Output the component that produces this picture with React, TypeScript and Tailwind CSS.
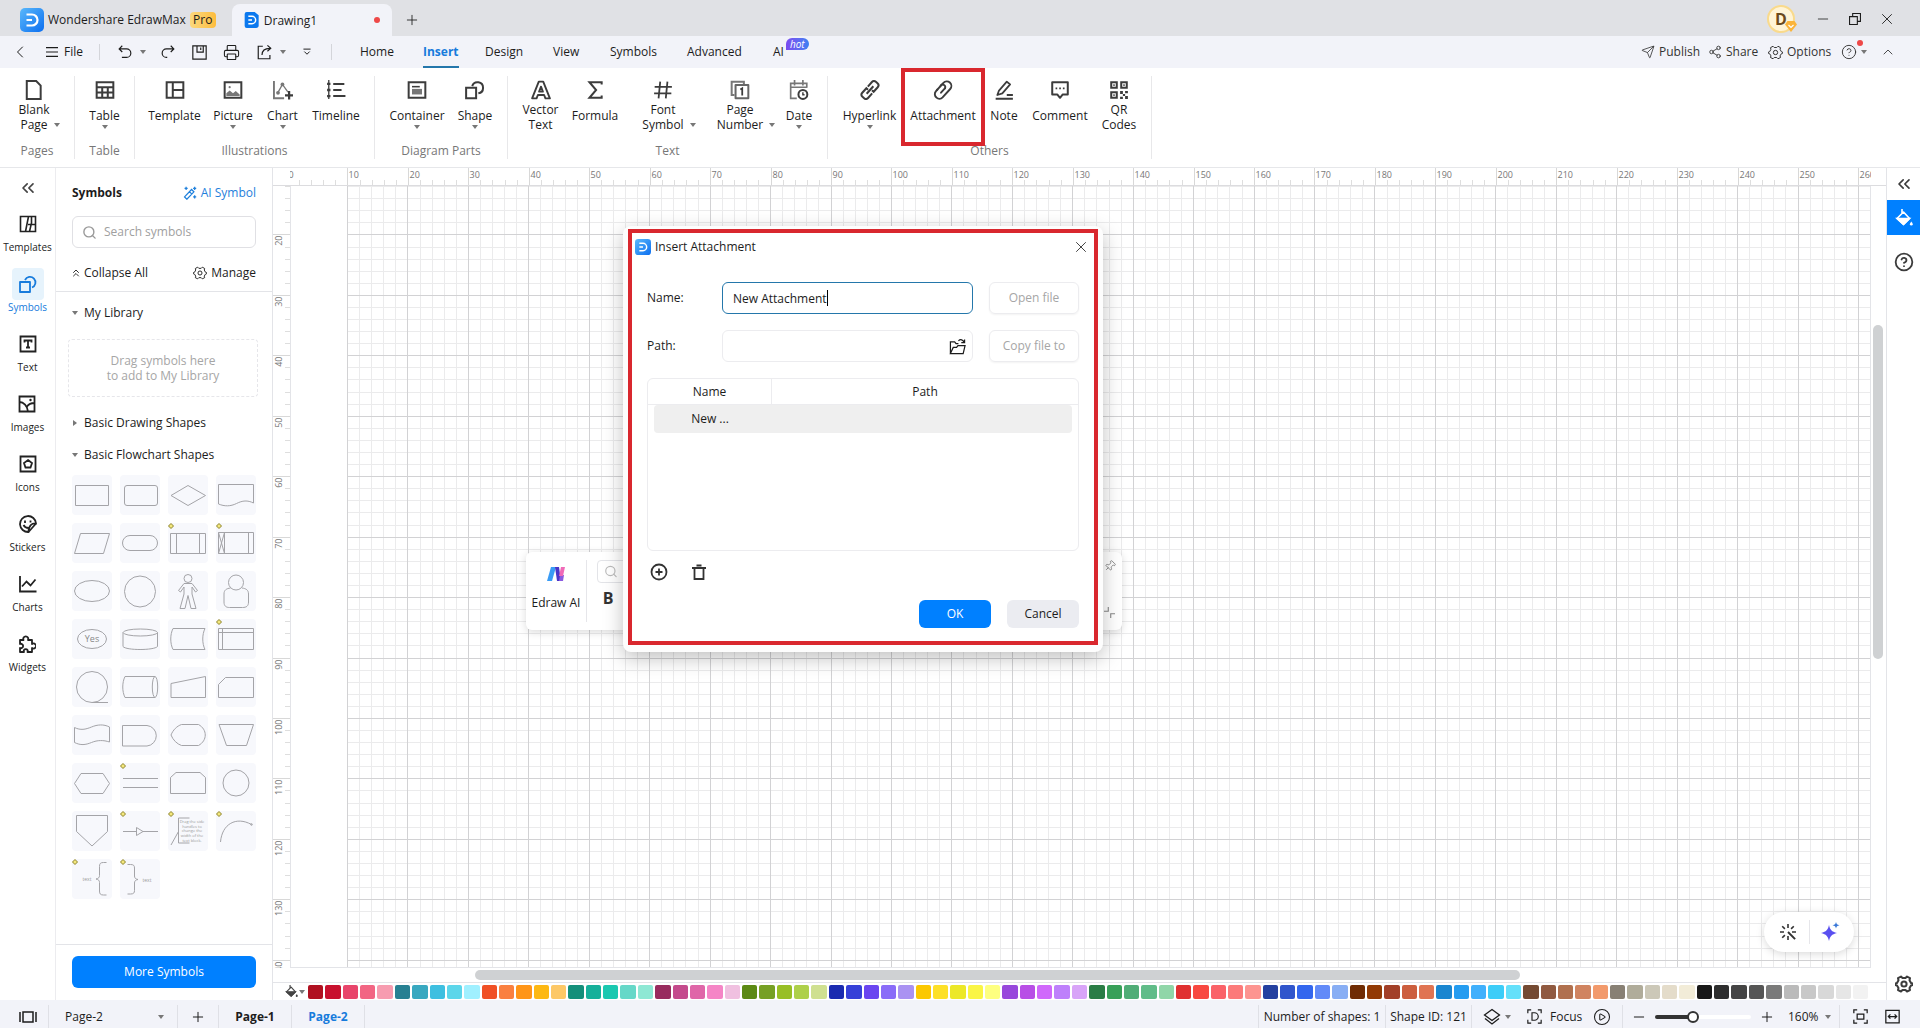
import React from 'react';
import {
  ChevronLeft,
  ChevronUp,
  ChevronsLeft,
  ChevronsUp,
  CirclePlay,
  CircleHelp,
  Minus,
  Pin,
  Plus,
  Printer,
  Search,
  Send,
  Share2,
  X,
} from 'lucide-react';

type IconProps = { children: React.ReactNode; size?: number; stroke?: number; className?: string };

// 18-unit box, line style shared by the ribbon and the side rail
const Icon: React.FC<IconProps> = ({ children, size = 18, stroke = 1.8, className = '' }) => (
  <svg
    width={size}
    height={size}
    viewBox="0 0 18 18"
    fill="none"
    stroke="currentColor"
    strokeWidth={stroke}
    className={`shrink-0 ${className}`}
    aria-hidden="true"
  >
    {children}
  </svg>
);

const Caret: React.FC<{ className?: string }> = ({ className = '' }) => (
  <svg width="6" height="4" viewBox="0 0 6 4" className={`shrink-0 text-[#777] ${className}`} aria-hidden="true">
    <path d="M0 0h6L3 4z" fill="currentColor" />
  </svg>
);

const Logo: React.FC<{ size: number; flat?: boolean }> = ({ size, flat }) => (
  <svg width={size} height={size} viewBox="0 0 24 24" className="shrink-0" aria-hidden="true">
    <defs>
      <linearGradient id="logo" x1="0" y1="0" x2="1" y2="1">
        <stop offset="0" stopColor="#5ab8fb" />
        <stop offset="1" stopColor="#0c6ff0" />
      </linearGradient>
    </defs>
    {flat ? (
      <path d="M4 0h12l6 5v15a4 4 0 0 1-4 4H4a3 3 0 0 1-3-3V3a3 3 0 0 1 3-3z" fill="#0b78ee" />
    ) : (
      <rect width="24" height="24" rx="5" fill="url(#logo)" />
    )}
    <path d="M6.500 6.500H12a5.500 5.500 0 0 1 0 11H6.500M6.500 12H12" fill="none" stroke="#fff" strokeWidth="2.200" />
  </svg>
);

const Gear: React.FC<{ size?: number; stroke?: number }> = ({ size = 16, stroke = 1.2 }) => (
  <Icon size={size} stroke={stroke}>
    <path
      strokeLinejoin="round"
      d="M6 1.500 7.500 3h3L12 1.500l3 1.700-.5 2L16 8l1.500.5v1.500L16 10.500l-1.500 2.500.5 2-3 1.500-1.500-1.500h-3L6 16.500 3 15l.5-2L2 10.500.5 10V8.500L2 8l1.500-2.800-.5-2z"
    />
    <circle cx="9" cy="9" r="2.600" />
  </Icon>
);

const PaintBucket: React.FC<{ size?: number }> = ({ size = 18 }) => (
  <Icon size={size} stroke={1.6}>
    <path d="M7 0v4M2 9.500 8.500 3l6 6.500-6 6z" strokeLinejoin="round" />
    <path d="M2 9.500h12.500l-6 6z" fill="currentColor" />
    <path d="M16.300 12.500c1 1.400 1.400 2 1.400 2.700a1.400 1.400 0 0 1-2.800 0c0-.7.400-1.300 1.400-2.700z" fill="currentColor" stroke="none" />
  </Icon>
);

const ribbonIcons: Record<string, React.ReactNode> = {
  blank: <path d="M2.500 1h8.500l4 4v12H2.500z" />,
  table: <path d="M1.500 2h15v14h-15zM1.500 6.500h15M1.500 11.200h15M6.500 6.500V16M11.500 6.500V16" />,
  template: <path d="M1.500 2h15v14h-15zM7 2v14M7 9h9.500" />,
  picture: (
    <>
      <path d="M1.500 2h15v14h-15z" />
      <path d="M3 14.500V12l3-2.500 3 2.500 2.500-2 3.500 3v1.500z" fill="#777" stroke="none" />
      <circle cx="6" cy="6.500" r="1" fill="#777" stroke="none" />
    </>
  ),
  chart: (
    <>
      <path d="M.8 1v15.500H10" stroke="#777" />
      <path d="M4 12 8.500 4l5 7" stroke="#777" strokeWidth="1.200" />
      <circle cx="4.500" cy="11.500" r="1.700" fill="#777" stroke="none" />
      <circle cx="8.500" cy="4" r="1.700" fill="#777" stroke="none" />
      <path d="M14.500 10v7.500M10.800 13.800h7.200" strokeWidth="2" />
    </>
  ),
  timeline: (
    <>
      <path d="M6.500 3.500h10M6.500 9H14M6.500 14.500h11" />
      <path d="M2.500 0v17" strokeWidth="1.200" />
      <path d="M1 3.500h3M1 9h3M1 14.500h3" strokeWidth="2.200" />
    </>
  ),
  container: (
    <>
      <path d="M1.500 2h15v14h-15z" />
      <path d="M4.500 6h7" strokeWidth="1.400" />
      <path d="M4.500 8h9v5h-9z" fill="#777" stroke="none" />
    </>
  ),
  shape: (
    <>
      <path d="M1 7h9v9.500H1z" />
      <path d="M6.500 5.500a5 5 0 1 1 5.500 6.500" />
    </>
  ),
  vector: (
    <path d="M7 1.500h4l6 15h-4l-1.200-3H6.200l-1.200 3H1zM9 6l-1.700 4.500h3.400z" strokeWidth="1.700" strokeLinejoin="round" />
  ),
  formula: <path d="M15 4V2H4l6 7-6 7h11v-2" />,
  font: <path d="M6.500 1.500 5 16.500M13 1.500l-1.500 15M1.500 6.200h15.500M1 12h15.500" strokeWidth="1.600" />,
  number: (
    <>
      <path d="M4 13.500H1.500V1.500h11V4" stroke="#777" />
      <path d="M5 4.500h11.500v12H5z" stroke="#666" strokeLinejoin="round" />
      <path d="M9.300 8.500 11 7.500V14" strokeWidth="1.600" />
    </>
  ),
  date: (
    <>
      <path d="M7 16.500H1.500V3H16v4M1.500 6.500H16M5 0v5M12.500 0v5" stroke="#777" strokeWidth="1.500" />
      <circle cx="12.500" cy="13" r="4" />
      <path d="M12.500 11v2.300H14" strokeWidth="1.300" />
    </>
  ),
  hyperlink: (
    <g transform="rotate(42 9 9)">
      <path d="M5.500 8V2.500A2.500 2.500 0 0 1 8 0h2a2.500 2.500 0 0 1 2.500 2.500V8H10.500" />
      <path d="M12.500 10v5.500A2.500 2.500 0 0 1 10 18H8a2.500 2.500 0 0 1-2.500-2.500V10H7.500" />
      <path d="M9 4.500v9" />
    </g>
  ),
  attachment: (
    <g transform="rotate(42 9 9)" strokeWidth="1.700" strokeLinecap="round">
      <path d="M9.300 12V6.500M5 8V4a4 4 0 0 1 8.200 0v10.200a4 4 0 0 1-4 3.800 4 4 0 0 1-4.200-3.800V12" />
      <path d="M9.300 6.500a2 2 0 0 0-4.300 1.500v4.500" />
    </g>
  ),
  note: (
    <>
      <path d="M4.500 9.500 11.500 1.500l3 2.500L7.500 12l-4.500 1.500z" strokeLinejoin="round" strokeWidth="1.600" />
      <path d="M1.500 16.800H17M11.500 13.500H17" />
    </>
  ),
  comment: (
    <>
      <path d="M2 2h14v11h-4.500L9 16l-2.500-3H2z" strokeLinejoin="round" />
      <path d="M5 7.500h1.500M8.300 7.500h1.500M11.600 7.500h1.500" strokeWidth="1.600" />
    </>
  ),
  qr: (
    <>
      <path d="M2 2h5v5H2zM11 2h5v5h-5zM2 11h5v5H2z" />
      <path d="M4.500 3.800v1.500M13.500 3.800v1.500M4.500 12.800v1.500" strokeWidth="1.200" />
      <path d="M10 10h2.500v2.500H10zM14.500 10H17v2h-2.500zM12.500 12.500h2v2h-2zM10 15h2.500v2H10zM14.500 14.500H17V17h-2.500z" fill="currentColor" stroke="none" />
    </>
  ),
};

type Tool = { icon: string; lines: string[]; width: string; caret?: 'below' | 'side'; marked?: boolean };
type Group = { label: string; width: string; tools: Tool[] };

const groups: Group[] = [
  { label: 'Pages', width: 'w-[75px]', tools: [{ icon: 'blank', lines: ['Blank', 'Page'], width: 'w-[54px]', caret: 'side' }] },
  { label: 'Table', width: 'w-[60px]', tools: [{ icon: 'table', lines: ['Table'], width: 'w-11', caret: 'below' }] },
  {
    label: 'Illustrations',
    width: 'w-60',
    tools: [
      { icon: 'template', lines: ['Template'], width: 'w-16' },
      { icon: 'picture', lines: ['Picture'], width: 'w-[53px]', caret: 'below' },
      { icon: 'chart', lines: ['Chart'], width: 'w-[46px]', caret: 'below' },
      { icon: 'timeline', lines: ['Timeline'], width: 'w-[61px]' },
    ],
  },
  {
    label: 'Diagram Parts',
    width: 'w-[133px]',
    tools: [
      { icon: 'container', lines: ['Container'], width: 'w-[68px]', caret: 'below' },
      { icon: 'shape', lines: ['Shape'], width: 'w-12', caret: 'below' },
    ],
  },
  {
    label: 'Text',
    width: 'w-80',
    tools: [
      { icon: 'vector', lines: ['Vector', 'Text'], width: 'w-[49px]' },
      { icon: 'formula', lines: ['Formula'], width: 'w-[60px]' },
      { icon: 'font', lines: ['Font', 'Symbol'], width: 'w-[76px]', caret: 'side' },
      { icon: 'number', lines: ['Page', 'Number'], width: 'w-[78px]', caret: 'side' },
      { icon: 'date', lines: ['Date'], width: 'w-10', caret: 'below' },
    ],
  },
  {
    label: 'Others',
    width: 'w-[324px]',
    tools: [
      { icon: 'hyperlink', lines: ['Hyperlink'], width: 'w-[67px]', caret: 'below' },
      { icon: 'attachment', lines: ['Attachment'], width: 'w-20', marked: true },
      { icon: 'note', lines: ['Note'], width: 'w-[42px]' },
      { icon: 'comment', lines: ['Comment'], width: 'w-[70px]' },
      { icon: 'qr', lines: ['QR', 'Codes'], width: 'w-12' },
    ],
  },
];

const RibbonTool: React.FC<{ tool: Tool }> = ({ tool }) => (
  <button className={`relative flex h-16 shrink-0 flex-col items-center ${tool.width}`}>
    {tool.marked && <span className="absolute -inset-x-[2px] -top-3 h-[78px] border-4 border-[#d9272e]" />}
    <Icon size={20} className="text-[#3c3c3c]">
      {ribbonIcons[tool.icon]}
    </Icon>
    {tool.lines.length === 2 ? (
      <span className="mt-[2px] flex flex-col items-center leading-[15px]">
        <span>{tool.lines[0]}</span>
        <span className="relative">
          {tool.lines[1]}
          {tool.caret === 'side' && <Caret className="absolute top-[6px] left-full ml-[6px]" />}
        </span>
      </span>
    ) : (
      <>
        <span className="mt-[7px] leading-[18px]">{tool.lines[0]}</span>
        {tool.caret === 'below' && <Caret />}
      </>
    )}
  </button>
);

const Ribbon: React.FC = () => (
  <div className="flex h-[100px] shrink-0 border-b border-[#e6e7ea] bg-white">
    {groups.map((group) => (
      <div key={group.label} className={`my-2 flex shrink-0 flex-col border-r border-[#e8e8ea] ${group.width}`}>
        <div className={`flex pt-1 ${group.label === 'Pages' ? 'pl-[7px]' : 'justify-center'}`}>
          {group.tools.map((tool) => (
            <RibbonTool key={tool.icon} tool={tool} />
          ))}
        </div>
        <div className="text-center leading-[14px] text-[#777]">{group.label}</div>
      </div>
    ))}
  </div>
);

const TitleBar: React.FC = () => (
  <header className="flex h-9 shrink-0 items-center bg-[#e0e1e5] pt-1">
    <div className="flex items-center gap-1 pl-5">
      <Logo size={24} />
      <span className="whitespace-nowrap">Wondershare EdrawMax</span>
      <span className="flex h-4 w-[26px] items-center justify-center rounded-sm bg-linear-to-r from-[#fbd87c] to-[#fdbd3c]">Pro</span>
    </div>
    <div className="ml-4 flex h-8 w-40 items-center self-end rounded-t-lg bg-[#f2f3f9] px-3">
      <Logo size={16} flat />
      <span className="ml-1 pt-px">Drawing1</span>
      <span className="ml-auto size-[6px] rounded-full bg-[#ee4848]" />
    </div>
    <button aria-label="New tab" className="ml-3">
      <Plus size={16} strokeWidth={1.3} />
    </button>
    <div className="ml-auto flex items-center gap-4 pr-6 pb-[3px]">
      <span className="relative flex size-7 items-center justify-center rounded-full border-2 border-[#f9da8c] bg-[#fff4d6] text-base font-bold text-[#6b4a1c]">
        D
        <svg width="12" height="11" viewBox="0 0 12 11" className="absolute -right-1 -bottom-px" aria-hidden="true">
          <path d="M2.500 0h7L12 3.500 6 11 0 3.500z" fill="#fbb43a" />
          <path d="M3.500 4 6 6.500 8.500 4" fill="none" stroke="#fff" strokeWidth="1.200" />
        </svg>
      </span>
      <button aria-label="Minimize" className="ml-1">
        <Minus size={16} strokeWidth={1.2} />
      </button>
      <button aria-label="Restore" className="ml-px">
        <Icon size={14} stroke={1.4}>
          <path d="M2 6h10v10H2zM6 6V2h10v10h-4" />
        </Icon>
      </button>
      <button aria-label="Close window">
        <X size={18} strokeWidth={1.2} />
      </button>
    </div>
  </header>
);

const tabs = [
  { name: 'Home', width: 'w-[63px]' },
  { name: 'Insert', width: 'w-[62px]' },
  { name: 'Design', width: 'w-[68px]' },
  { name: 'View', width: 'w-[57px]' },
  { name: 'Symbols', width: 'w-[77px]' },
  { name: 'Advanced', width: 'w-[86px]' },
];

const MenuBar: React.FC = () => (
  <nav className="flex h-8 shrink-0 items-center bg-[#f2f3f9]">
    <button aria-label="Back" className="ml-[10px]">
      <ChevronLeft size={20} strokeWidth={1.2} />
    </button>
    <button className="ml-4 flex items-center gap-[6px]">
      <Icon size={12} stroke={1.7}>
        <path d="M0 2.500h18M0 9h18M0 15.500h18" />
      </Icon>
      File
    </button>
    <span className="ml-4 h-4 w-px bg-[#d4d5da]" />
    <div className="ml-[18px] flex items-center">
      <button aria-label="Undo" className="flex w-[43px] items-center gap-2">
        <Icon size={14} stroke={1.5}>
          <path d="M5.500 1 1.500 5l4 4M1.500 5H11a5.500 5.500 0 0 1 0 11H5" />
        </Icon>
        <Caret />
      </button>
      <button aria-label="Redo" className="w-[31px]">
        <Icon size={14} stroke={1.5}>
          <path d="m12.500 1 4 4-4 4M16.500 5H7a5.500 5.500 0 0 0 0 11h1" />
        </Icon>
      </button>
      <button aria-label="Save" className="w-[31px]">
        <Icon size={15} stroke={1.4}>
          <path d="M1 1h16v16H1zM6 1v7.500h7.500V1M10.500 3v3" />
        </Icon>
      </button>
      <button aria-label="Print" className="w-[34px]">
        <Printer size={17} strokeWidth={1.5} />
      </button>
      <button aria-label="Export" className="flex w-[46px] items-center gap-2">
        <Icon size={15} stroke={1.4}>
          <path d="M7 1.500H1.500v15h14V12M6 12c0-5 3-8 9.500-8M12.500.5 16.500 4l-4 3.500" />
        </Icon>
        <Caret />
      </button>
      <button aria-label="Customize">
        <Icon size={8} stroke={2.2}>
          <path d="M1 2.500h16M3 8l6 6 6-6" />
        </Icon>
      </button>
    </div>
    <span className="ml-5 h-4 w-px bg-[#d4d5da]" />
    <div className="ml-7 flex items-stretch self-stretch">
      {tabs.map((tab) => (
        <a key={tab.name} href="#" className={`relative flex items-center ${tab.width}`}>
          {tab.name === 'Insert' ? (
            <span className="flex h-full items-center border-y-2 border-t-transparent border-b-[#2477ab] font-bold text-[#177bdc]">
              Insert
            </span>
          ) : (
            tab.name
          )}
        </a>
      ))}
      <a href="#" className="relative flex items-center">
        AI
        <span className="absolute top-[2px] left-full ml-[2px] rounded-md rounded-bl-none bg-linear-to-r from-[#7a4af0] to-[#3a80f2] px-1 text-[10px] leading-3 text-white italic">
          hot
        </span>
      </a>
    </div>
    <div className="ml-auto flex items-center pr-6 text-[#333]">
      <button className="flex w-[67px] items-center gap-1">
        <Send size={14} strokeWidth={1.4} />
        Publish
      </button>
      <button className="flex w-[60px] items-center gap-1">
        <Share2 size={14} strokeWidth={1.5} />
        Share
      </button>
      <button className="flex w-[73px] items-center gap-1">
        <Gear size={15} />
        Options
      </button>
      <button aria-label="Help" className="relative flex w-[39px] items-center gap-1">
        <CircleHelp size={16} strokeWidth={1.4} />
        <Caret />
        <span className="absolute -top-1 left-4 size-[6px] rounded-full bg-[#ee4848]" />
      </button>
      <button aria-label="Collapse ribbon">
        <ChevronUp size={16} strokeWidth={1.3} />
      </button>
    </div>
  </nav>
);

const railItems: { name: string; icon: React.ReactNode }[] = [
  {
    name: 'Templates',
    icon: <path d="M1.500 1.500h15v15h-15zM9.500 1.500 6.500 16.500M10.500 16.500 12.500 8V1.500M9 9.500h7.500" strokeWidth="1.600" />,
  },
  {
    name: 'Symbols',
    icon: (
      <>
        <path d="M1 7h10v10H1z" strokeLinejoin="round" />
        <path d="M6 5a5.500 5.500 0 1 1 7 7.500" />
      </>
    ),
  },
  { name: 'Text', icon: <path d="M1.500 1.500h15v15h-15zM5.500 7.500V5.500h7v2M9 5.500v7M7 12.500h4" /> },
  {
    name: 'Images',
    icon: (
      <>
        <path d="M1.500 1.500h15v15h-15zM1.500 7c4 0 8 4 8.500 9.500M9 11.500c2-3 4-3.500 7.500-3.500" />
        <circle cx="12.500" cy="5" r="1.200" fill="currentColor" stroke="none" />
      </>
    ),
  },
  { name: 'Icons', icon: <path d="M1.500 1.500h15v15h-15zM9 5l4 3-1.500 4.500h-5L5 8z" /> },
  {
    name: 'Stickers',
    icon: (
      <>
        <path d="M9.500 17A8 8 0 1 1 17 8.500c-4-.5-7.500 2-7.500 8.500zM9.500 17 17 8.500M4.500 10c1 2 2.500 3 5 3" />
        <path d="M6 5.500V8M11.500 5.500V7.500" />
      </>
    ),
  },
  { name: 'Charts', icon: <path d="M1 1v15.500h16.500M3 11.500l4.500-5 4 4 5-6" /> },
  {
    name: 'Widgets',
    icon: (
      <path
        strokeLinejoin="round"
        d="M2 5h3.500a2.500 2.500 0 1 1 4.500 0h4v4a2.500 2.500 0 1 1 0 4v4H9.500a2 2 0 1 0-3.500 0H2v-4a2.200 2.200 0 1 0 0-4z"
      />
    ),
  },
];

const Rail: React.FC = () => (
  <aside className="flex w-14 shrink-0 flex-col items-center border-r border-[#ececef] bg-white">
    <button aria-label="Collapse panel" className="flex h-10 shrink-0 items-center">
      <ChevronsLeft size={20} strokeWidth={2} className="text-[#444]" />
    </button>
    {railItems.map((item) => {
      const active = item.name === 'Symbols';
      return (
        <button key={item.name} className={`flex h-[60px] shrink-0 flex-col items-center ${active ? 'text-[#177bdc]' : 'text-[#222]'}`}>
          <span className={`flex size-8 items-center justify-center rounded ${active ? 'bg-[#e6f3fc]' : ''}`}>
            <Icon size={18}>{item.icon}</Icon>
          </span>
          <span className="text-[10px] leading-[14px]">{item.name}</span>
        </button>
      );
    })}
  </aside>
);

// each shape is drawn in a 40 x 40 tile; `knob` adds the yellow handle in the corner
const shapes: { d?: string; knob?: boolean; extra?: React.ReactNode }[] = [
  { d: 'M3.500 10.500h33v20h-33z' },
  { extra: <rect x="4.500" y="10.500" width="33" height="20" rx="2.500" /> },
  { d: 'M3 20.500 20 10.500l17.500 10L20 30.500z' },
  { d: 'M2.500 9.500h35V28c-6-3-11-2.500-17 .5s-12 3-18 .5z' },
  { d: 'M8.500 10.500h29l-6 20h-29z' },
  { extra: <rect x="2.500" y="12.500" width="35" height="15" rx="7.500" /> },
  { d: 'M2.500 10.500h35v20h-35zM8.500 10.500v20M31.500 10.500v20', knob: true },
  { d: 'M2.500 9.500h35v21h-35zM8.500 9.500v21M32.500 9.500v21M2.500 9.500l6 21M8.500 9.500l-6 21', knob: true },
  { extra: <ellipse cx="20" cy="20" rx="17.500" ry="10.500" /> },
  { extra: <circle cx="20" cy="20.500" r="15.500" /> },
  {
    extra: <circle cx="20" cy="7.500" r="4" />,
    d: 'M16 12.500h8l5.500 7-2 1.500-3.500-5v7l4 14.500h-5l-3-13-3 13h-5l4-14.500v-7l-3.500 5-2-1.500z',
  },
  {
    extra: <circle cx="20" cy="11.500" r="7.500" />,
    d: 'M14.500 17c-4 .5-6.500 2-6.500 6v8c0 4 2 5.500 5.500 5.500h13c4 0 6-1.500 6-5.500v-8c0-4-2.500-5.500-6.500-6',
  },
  {
    extra: (
      <>
        <ellipse cx="20" cy="20" rx="14.500" ry="9.500" />
        <text x="20" y="23" fontSize="9" textAnchor="middle" fill="#888" stroke="none">
          Yes
        </text>
      </>
    ),
  },
  { d: 'M3 13.500v14c3 4 31 4 34.500 0v-14', extra: <ellipse cx="20.300" cy="13.500" rx="17.200" ry="3.500" /> },
  { d: 'M5 9.500h32c-3 6-3 15 0 21H5c-3-6-3-15 0-21z' },
  { d: 'M2.500 9.500h35v21h-35zM2.500 13.500h35M6.500 9.500v21', knob: true },
  { extra: <circle cx="20" cy="20" r="15.500" />, d: 'M20 35.500h16' },
  { d: 'M35 9.500H5c-3 6-3 15 0 21h30', extra: <ellipse cx="35" cy="20" rx="2.700" ry="10.500" /> },
  { d: 'M3 16.500 37.500 9.500v21H3z' },
  { d: 'M9.500 10.500h28v20h-35v-13z' },
  { d: 'M2.500 12.500c6 3 11 2 17-.5s12-3 18 0v15c-6-2-12-2-18 .5s-11 3-17 0z' },
  { d: 'M2.500 10.500H27a10.300 10.300 0 0 1 0 20.500H2.500z' },
  { d: 'M13.500 9.500h17c9 5 9 16 0 21h-17C9 29 5 25 3 20c2-5 6-9 10.500-10.500z' },
  { d: 'M3 9.500h34.500l-7 21h-20z' },
  { d: 'M9 10.500h22l6.500 10-6.500 10H9l-6.500-10z' },
  { d: 'M3 15.500h35M3 24.500h35', knob: true },
  { d: 'M8 9.500h24l5.500 5v16h-35v-16z' },
  { extra: <circle cx="20" cy="20" r="13" /> },
  { d: 'M4.500 4.500h31v16L20 35 4.500 20.500z' },
  { d: 'M3 20.500h13.500M23 20.500h15M16.500 16.500v8l6.500-4z', knob: true },
  {
    d: 'M21.500 7h-11v25h11M10.500 20.500 3 34',
    knob: true,
    extra: (
      <g fontSize="4" fill="#999" stroke="none" textAnchor="middle">
        <text x="24" y="12">Drag the side</text>
        <text x="24" y="16.700">handles to</text>
        <text x="24" y="21.400">change the</text>
        <text x="24" y="26.100">width of the</text>
        <text x="24" y="30.800">text block.</text>
      </g>
    ),
  },
  { d: 'M4.500 31C6 13 20 5 35.500 13.500', knob: true, extra: <circle cx="35.500" cy="13.500" r=".8" /> },
  {
    d: 'M34.500 3.500h-3c-3 0-4 1-4 4v9c0 2-1 3-3.500 3.500 2.500.5 3.500 1.500 3.500 3.500v8.500c0 3 1 4 4 4h3',
    knob: true,
    extra: (
      <text x="15" y="22" fontSize="5" textAnchor="middle" fill="#999" stroke="none">
        text
      </text>
    ),
  },
  {
    d: 'M7.500 5.500h3c3 0 4 1 4 3.500V17c0 2 1 3 3.500 3.500-2.500.5-3.500 1.500-3.500 3.500v7.500c0 2.500-1 3.500-4 3.500h-3',
    knob: true,
    extra: (
      <text x="27" y="23" fontSize="5" textAnchor="middle" fill="#999" stroke="none">
        text
      </text>
    ),
  },
];

const SymbolsPanel: React.FC = () => (
  <section className="flex w-[217px] shrink-0 flex-col border-r border-[#e3e4e8] bg-white">
    <div className="flex flex-col px-4 pt-4 pb-[9px]">
      <div className="flex h-[18px] items-center justify-between">
        <h2 className="font-bold">Symbols</h2>
        <a href="#" className="flex items-center gap-1 text-[#1f80dc]">
          <Icon size={14} stroke={1.6}>
            <path d="m2 14 9-9.500L14 7.500 5 17zM8.500 7.500l3 3M15 1v4M13 3h4M4 1v4M2 3h4M15 12v4M13 14h4" />
          </Icon>
          AI Symbol
        </a>
      </div>
      <label className="mt-[14px] flex h-8 items-center gap-[7px] rounded-md border border-[#e0e0e4] px-[9px]">
        <Search size={15} strokeWidth={2.2} className="text-[#999]" />
        <input type="text" aria-label="Search symbols" placeholder="Search symbols" className="min-w-0 flex-1 outline-none placeholder:text-[#a0a0a0]" />
      </label>
      <div className="mt-4 flex h-[18px] items-center justify-between">
        <button className="flex items-center gap-[2px]">
          <ChevronsUp size={12} strokeWidth={1.8} className="-ml-[2px]" />
          Collapse All
        </button>
        <button className="flex items-center gap-1">
          <Gear size={14} />
          Manage
        </button>
      </div>
    </div>
    <div className="flex flex-1 flex-col border-t border-[#e3e4e8] px-4 pt-3">
      <button className="flex h-[18px] items-center gap-[6px]">
        <Caret />
        My Library
      </button>
      <div className="-mr-[2px] -ml-1 mt-[17px] flex h-[58px] flex-col justify-center rounded border border-dashed border-[#e6e6ea] text-center leading-[15px] text-[#a6a6a6]">
        <span>Drag symbols here</span>
        <span>to add to My Library</span>
      </div>
      <button className="mt-[17px] flex h-[18px] items-center gap-[6px]">
        <Caret className="-rotate-90" />
        Basic Drawing Shapes
      </button>
      <button className="mt-[14px] flex h-[18px] items-center gap-[6px]">
        <Caret />
        Basic Flowchart Shapes
      </button>
      <div className="mt-[11px] grid grid-cols-4 gap-2">
        {shapes.map((shape, i) => (
          <div key={i} className="size-10 rounded bg-[#f7f8fc]">
            <svg width="40" height="40" viewBox="0 0 40 40" fill="none" stroke="#a4a4a8" strokeWidth="1">
              {shape.d && <path d={shape.d} />}
              {shape.extra}
              {shape.knob && <path d="M3 .5 5.500 3 3 5.500.5 3z" fill="#f4e87c" stroke="#8c8228" />}
            </svg>
          </div>
        ))}
      </div>
    </div>
    <div className="flex h-14 shrink-0 border-t border-[#e3e4e8] px-4 pt-[11px]">
      <button className="h-8 flex-1 rounded-md bg-[#0080ff] text-white">More Symbols</button>
    </div>
  </section>
);

// ruler units: ten millimetres are a little over sixty pixels at 160 %
const STEP = 60.44;
const at = (origin: number, n: number) => Math.round(origin + (n * STEP) / 5) + 0.5;
const range = (from: number, to: number) => Array.from({ length: to - from }, (_, i) => from + i);

const HorizontalRuler: React.FC = () => (
  <svg height="17" className="block min-w-0 flex-1 bg-white" aria-hidden="true">
    {range(0, 200).map((n) => (
      <path key={n} d={`M${at(-3, n)} ${n % 5 ? 12 : 0}V18`} stroke={n % 5 ? '#dedede' : '#d8d8d8'} />
    ))}
    {range(0, 27).map((n) => (
      <text key={n} x={at(-3, n * 5) + 1} y="10" fontSize="9" fill="#777">
        {n * 10}
      </text>
    ))}
  </svg>
);

const VerticalRuler: React.FC = () => (
  <svg width="18" className="block h-full shrink-0 border-r border-[#e3e4e8] bg-white" aria-hidden="true">
    {range(0, 100).map((n) => (
      <path key={n} d={`M${n % 5 ? 12 : 0} ${at(-12, n)}H18`} stroke={n % 5 ? '#dedede' : '#d8d8d8'} />
    ))}
    {range(1, 14).map((n) => (
      <text key={n} transform={`translate(9 ${at(-12, n * 5) + 1}) rotate(-90)`} fontSize="9" textAnchor="end" fill="#777">
        {n * 10 + 10}
      </text>
    ))}
  </svg>
);

const Grid: React.FC = () => (
  <svg className="block size-full" aria-hidden="true">
    {[false, true].map((major) => (
      <g key={String(major)} stroke={major ? '#d2d2d4' : '#ebebec'}>
        {range(0, 200)
          .filter((n) => (n % 5 === 0) === major)
          .map((n) => (
            <React.Fragment key={n}>
              <path d={`M${at(56, n)} 0V3000`} />
              <path d={`M56 ${at(-12, n)}H6000`} />
            </React.Fragment>
          ))}
      </g>
    ))}
  </svg>
);

const QuickToolbar: React.FC = () => (
  <div className="absolute top-[384px] left-[253px] flex h-[78px] w-[596px] rounded-md bg-white py-2 shadow-[0_2px_8px_rgba(0,0,0,0.15)]">
    <button className="flex w-[61px] flex-col items-center border-r border-[#e6e6ea] pt-[5px]">
      <svg width="20" height="18" viewBox="0 0 20 18" aria-hidden="true">
        <path d="M5 2h5L6 16H1z" fill="#3a9cf5" />
        <path d="M9 2h4l2 14h-4z" fill="#4a35c8" />
        <path d="M13 16h4l1-6h-4z" fill="#8a5ae0" />
        <path d="M15 2h4l-2 9h-4z" fill="#f06ab8" />
      </svg>
      <span className="mt-3 leading-4">Edraw AI</span>
    </button>
    <div className="ml-[10px] flex flex-1 flex-col">
      <label className="flex h-[23px] w-[200px] items-center rounded border border-[#e3e4e8] px-[6px]">
        <Search size={15} className="text-[#bbb]" />
        <input aria-label="Font" className="w-full outline-none" />
      </label>
      <button className="mt-[5px] w-[22px] text-base leading-5 font-bold text-[#333]">B</button>
    </div>
    <div className="flex w-[18px] flex-col justify-between pb-1 text-[#888]">
      <Pin size={12} strokeWidth={1.8} className="rotate-45" />
      <Icon size={11}>
        <path d="M7 0v7H0M18 11h-7v7" />
      </Icon>
    </div>
  </div>
);

const palette = [
  '#b01020', '#c8102e', '#e8456b', '#f26583', '#f79cb0', '#278092', '#38a8c0', '#3ebfe0', '#5cd6ea', '#a0f0ff',
  '#f05025', '#fa8040', '#ff9518', '#fdb813', '#fdc866', '#148f7a', '#16b09a', '#1ac8b0', '#66d8c8', '#8ee8d4',
  '#982b5e', '#c44a8c', '#df66a8', '#f585c6', '#f0c0e0', '#5c8a14', '#76a024', '#98bf25', '#aed04a', '#cfe090',
  '#1a2ab0', '#3640d8', '#6a45f0', '#8a6cf8', '#aa92f2', '#fbc800', '#fde028', '#ece828', '#faf545', '#feff80',
  '#9848dc', '#b84ee6', '#d068fb', '#be80fb', '#d8a4f8', '#2a7d45', '#38a058', '#50ad76', '#60bc88', '#90d6a8',
  '#e03030', '#f84840', '#fa6268', '#fc7a7a', '#fd9490', '#2440a0', '#3055cc', '#3366ee', '#628af8', '#88aef4',
  '#702c04', '#923a04', '#a24028', '#cc5e3e', '#e07452', '#1a86d0', '#249cf0', '#40b0fc', '#3ccdf8', '#64e0fa',
  '#744a32', '#905a40', '#b0704e', '#d08460', '#f29a6c', '#888074', '#b0ac9a', '#ccc8b8', '#e4dcca', '#f2ecd8',
  '#181818', '#2e2e2e', '#444444', '#555555', '#7a7a7a', '#bababa', '#c8c8c8', '#d8d8d8', '#e6e6e6', '#f2f2f2',
];

const Workspace: React.FC = () => (
  <main className="relative flex min-w-0 flex-1 flex-col bg-white">
    <div className="flex h-[18px] shrink-0 border-b border-[#dcdcdf] pr-[15px] pl-[17px]">
      <HorizontalRuler />
    </div>
    <div className="flex min-h-0 flex-1">
      <VerticalRuler />
      <div className="min-w-0 flex-1 overflow-hidden border-r border-b border-[#e3e4e8]">
        <Grid />
      </div>
      <div className="w-[15px] shrink-0 pt-[139px] pr-[3px] pl-[2px]">
        <div className="h-[334px] rounded-full bg-[#cfd1d3]" />
      </div>
    </div>
    <div className="flex h-[15px] shrink-0 items-center border-b border-[#e3e4e8] pr-[366px] pl-[202px]">
      <div className="h-[10px] flex-1 rounded-full bg-[#cfd1d3]" />
    </div>
    <div className="flex h-[17px] shrink-0 items-center pr-[17px] pl-3 text-[#444]">
      <button aria-label="Fill color" className="flex w-[23px] items-center gap-px">
        <PaintBucket size={13} />
        <Caret />
      </button>
      <div className="flex flex-1 gap-[2px]">
        {palette.map((color) => (
          <button key={color} aria-label={color} className="h-[14px] flex-1 rounded-xs" style={{ backgroundColor: color }} />
        ))}
      </div>
    </div>
    <QuickToolbar />
    <div className="absolute right-8 bottom-12 flex h-10 w-[90px] items-center rounded-full bg-white shadow-[0_2px_8px_rgba(0,0,0,0.15)]">
      <button aria-label="Effects" className="flex flex-1 justify-center border-r border-[#e6e6ea] py-1 pl-1 text-[#333]">
        <Icon size={16}>
          <path d="M9 0v4.500M9 13.500V18M0 9h4.500M13.500 9H18M2.500 2.500l3 3M15.500 2.500l-3 3M2.500 15.500l3-3" />
          <path d="m9 9 8 8" strokeWidth="2.200" />
        </Icon>
      </button>
      <button aria-label="AI assistant" className="flex flex-1 justify-center pr-1">
        <svg width="20" height="20" viewBox="0 0 20 20" aria-hidden="true">
          <path d="M9 3c1.200 5 2.500 6.500 8 8-5.500 1.500-6.800 3-8 8-1.200-5-2.500-6.500-8-8 5.500-1.500 6.800-3 8-8z" fill="#5a50f0" />
          <path d="M16 0c.5 2 1 2.700 3.500 3.300C17 4 16.500 4.500 16 6.500c-.5-2-1-2.500-3.500-3.200C15 2.700 15.500 2 16 0z" fill="#3a78d8" />
        </svg>
      </button>
    </div>
  </main>
);

const RightRail: React.FC = () => (
  <aside className="flex w-[34px] shrink-0 flex-col items-center border-l border-[#e3e4e8] bg-white text-[#3c3c3c]">
    <button aria-label="Expand panel" className="flex h-8 items-center">
      <ChevronsLeft size={20} strokeWidth={2} />
    </button>
    <button aria-label="Format" className="flex h-[35px] w-full items-center justify-center bg-[#0080ff] text-white">
      <PaintBucket />
    </button>
    <button aria-label="Help" className="flex h-[54px] items-center">
      <CircleHelp size={20} strokeWidth={2.2} />
    </button>
    <button aria-label="Settings" className="mt-auto mb-[7px]">
      <Gear size={18} stroke={2} />
    </button>
  </aside>
);

const Divider: React.FC = () => <span className="h-full w-px shrink-0 bg-[#dfe0e6]" />;

const StatusBar: React.FC = () => (
  <footer className="flex h-7 shrink-0 items-center bg-[#f2f3f9] pt-[5px]">
    <button aria-label="Page list" className="flex w-12 justify-center pl-2">
      <Icon size={18} stroke={1.5}>
        <path d="M1 4v10M17 4v10M4 4h10v10H4z" />
      </Icon>
    </button>
    <Divider />
    <label className="relative flex w-32 items-center">
      <select aria-label="Page" defaultValue="Page-2" className="w-full appearance-none bg-transparent pl-4 outline-none">
        <option>Page-1</option>
        <option>Page-2</option>
      </select>
      <Caret className="pointer-events-none absolute right-[13px]" />
    </label>
    <Divider />
    <button aria-label="Add page" className="flex w-10 justify-center">
      <Plus size={16} strokeWidth={1.5} />
    </button>
    <Divider />
    <button className="w-[72px] text-center font-bold">Page-1</button>
    <Divider />
    <button className="w-[72px] text-center font-bold text-[#177bdc]">Page-2</button>
    <Divider />
    <div className="ml-auto flex h-full items-center whitespace-nowrap">
      <Divider />
      <span className="w-[126px] text-center">Number of shapes: 1</span>
      <Divider />
      <span className="w-[85px] text-center">Shape ID: 121</span>
      <Divider />
      <button aria-label="Layers" className="flex w-[55px] items-center gap-1 pl-[11px]">
        <Icon size={18} stroke={1.3}>
          <path d="m9 1.500 7.500 5.500L9 12.500 1.500 7zM2 10.500 9 16l7-5.500" />
        </Icon>
        <Caret />
      </button>
      <button className="flex w-[66px] items-center gap-2">
        <Icon size={15} stroke={1.4}>
          <path d="M5 1H1v4M13 1h4v4M5 17H1v-4M13 17h4v-4M6 4.500h3a4.500 4.500 0 0 1 0 9H6z" />
        </Icon>
        Focus
      </button>
      <button aria-label="Play" className="w-[29px]">
        <CirclePlay size={18} strokeWidth={1.4} />
      </button>
      <Divider />
      <button aria-label="Zoom out" className="ml-2">
        <Minus size={16} strokeWidth={1.5} />
      </button>
      <input
        type="range"
        aria-label="Zoom"
        defaultValue={38}
        className="mx-2 h-1 w-24 appearance-none rounded-full bg-linear-to-r from-[#333] from-40% to-white to-40% [&::-webkit-slider-thumb]:size-3 [&::-webkit-slider-thumb]:appearance-none [&::-webkit-slider-thumb]:rounded-full [&::-webkit-slider-thumb]:border-2 [&::-webkit-slider-thumb]:border-[#333] [&::-webkit-slider-thumb]:bg-white"
      />
      <button aria-label="Zoom in">
        <Plus size={16} strokeWidth={1.5} />
      </button>
      <button className="flex w-[64px] items-center gap-[6px] pl-[13px]">
        160%
        <Caret />
      </button>
      <Divider />
      <button aria-label="Fit page" className="ml-[13px]">
        <Icon size={15} stroke={1.5}>
          <path d="M5 1H1v4M13 1h4v4M5 17H1v-4M13 17h4v-4M5 6h8v6H5z" />
        </Icon>
      </button>
      <button aria-label="Fit width" className="mr-5 ml-[17px]">
        <Icon size={15} stroke={1.5}>
          <path d="M1 1.500h16v15H1zM4 9h10M6.500 6.500 4 9l2.500 2.500M11.500 6.500 14 9l-2.500 2.500" />
        </Icon>
      </button>
    </div>
  </footer>
);

const AttachmentDialog: React.FC = () => (
  <div
    role="dialog"
    aria-label="Insert Attachment"
    className="absolute top-[226px] left-[623px] w-[480px] rounded-lg bg-[#fdfdfd] px-[5px] pt-[3px] pb-[7px] shadow-[0_6px_20px_rgba(0,0,0,0.25)]"
  >
    <div className="border-4 border-[#d9272e] bg-white">
      <div className="flex h-7 items-center pr-1 pl-[3px]">
        <Logo size={16} />
        <span className="ml-1">Insert Attachment</span>
        <button aria-label="Close" className="ml-auto">
          <X size={18} strokeWidth={1.1} />
        </button>
      </div>
      <div className="px-[15px] pt-[21px] pb-[13px]">
        <div className="flex items-center">
          <label htmlFor="attachment-name" className="w-[75px]">
            Name:
          </label>
          <div className="relative w-[251px]">
            <input
              id="attachment-name"
              type="text"
              defaultValue="New Attachment"
              className="h-8 w-full rounded-md border border-[#2477ab] px-[10px] outline-none"
            />
            <span className="absolute top-2 left-[105px] h-4 w-px bg-black" />
          </div>
          <button className="ml-4 h-8 flex-1 rounded-md border border-[#ececef] text-[#a6a6a6] shadow-xs">Open file</button>
        </div>
        <div className="mt-4 flex items-center">
          <label htmlFor="attachment-path" className="w-[75px]">
            Path:
          </label>
          <div className="flex h-8 w-[251px] items-center rounded-md border border-[#ececef] pr-[6px]">
            <input id="attachment-path" type="text" className="min-w-0 flex-1 px-[10px] outline-none" />
            <button aria-label="Browse">
              <Icon size={17} stroke={1.3}>
                <path d="M1.500 16.500V4H6l1.500 2H10M1.500 16.500 4.500 10h3.500l1.500-2H17l-2 8.500zM10 3c2-2 5-1.500 6 2M16.500 1.500V5H13" />
              </Icon>
            </button>
          </div>
          <button className="ml-4 h-8 flex-1 rounded-md border border-[#ececef] text-[#a6a6a6] shadow-xs">Copy file to</button>
        </div>
        <div className="mt-4 h-[173px] rounded-md border border-[#ececef]">
          <table className="w-full table-fixed border-separate border-spacing-0">
            <thead>
              <tr>
                <th className="h-[26px] w-[124px] border-r border-b border-[#ececef] p-0 font-normal">Name</th>
                <th className="border-b border-[#ececef] p-0 font-normal">Path</th>
              </tr>
            </thead>
            <tbody>
              <tr>
                <td className="p-0 pl-[6px]">
                  <div className="flex h-7 items-center justify-center rounded-l bg-[#efefef] pr-[6px]">New ...</div>
                </td>
                <td className="p-0 pr-[6px]">
                  <div className="h-7 rounded-r bg-[#efefef]" />
                </td>
              </tr>
            </tbody>
          </table>
        </div>
        <div className="mt-3 flex items-center gap-[22px] pl-[3px] text-[#333]">
          <button aria-label="Add attachment">
            <Icon size={18}>
              <circle cx="9" cy="9" r="7.500" />
              <path d="M9 5.500v7M5.500 9h7" />
            </Icon>
          </button>
          <button aria-label="Delete attachment">
            <Icon size={18}>
              <path d="M2 5h14M6.500 2.500h5M4.500 5v11h9V5" />
            </Icon>
          </button>
        </div>
        <div className="mt-[19px] flex justify-end gap-4">
          <button className="h-7 w-[72px] rounded-md bg-[#0080ff] text-white">OK</button>
          <button className="h-7 w-[72px] rounded-md bg-[#ebecf1]">Cancel</button>
        </div>
      </div>
    </div>
  </div>
);

export default function App() {
  return (
    <div className="relative flex h-screen flex-col overflow-hidden bg-white font-['Open_Sans','Noto_Sans',sans-serif] text-xs text-[#1c1c1c]">
      <TitleBar />
      <MenuBar />
      <Ribbon />
      <div className="flex min-h-0 flex-1">
        <Rail />
        <SymbolsPanel />
        <Workspace />
        <RightRail />
      </div>
      <StatusBar />
      <AttachmentDialog />
    </div>
  );
}
